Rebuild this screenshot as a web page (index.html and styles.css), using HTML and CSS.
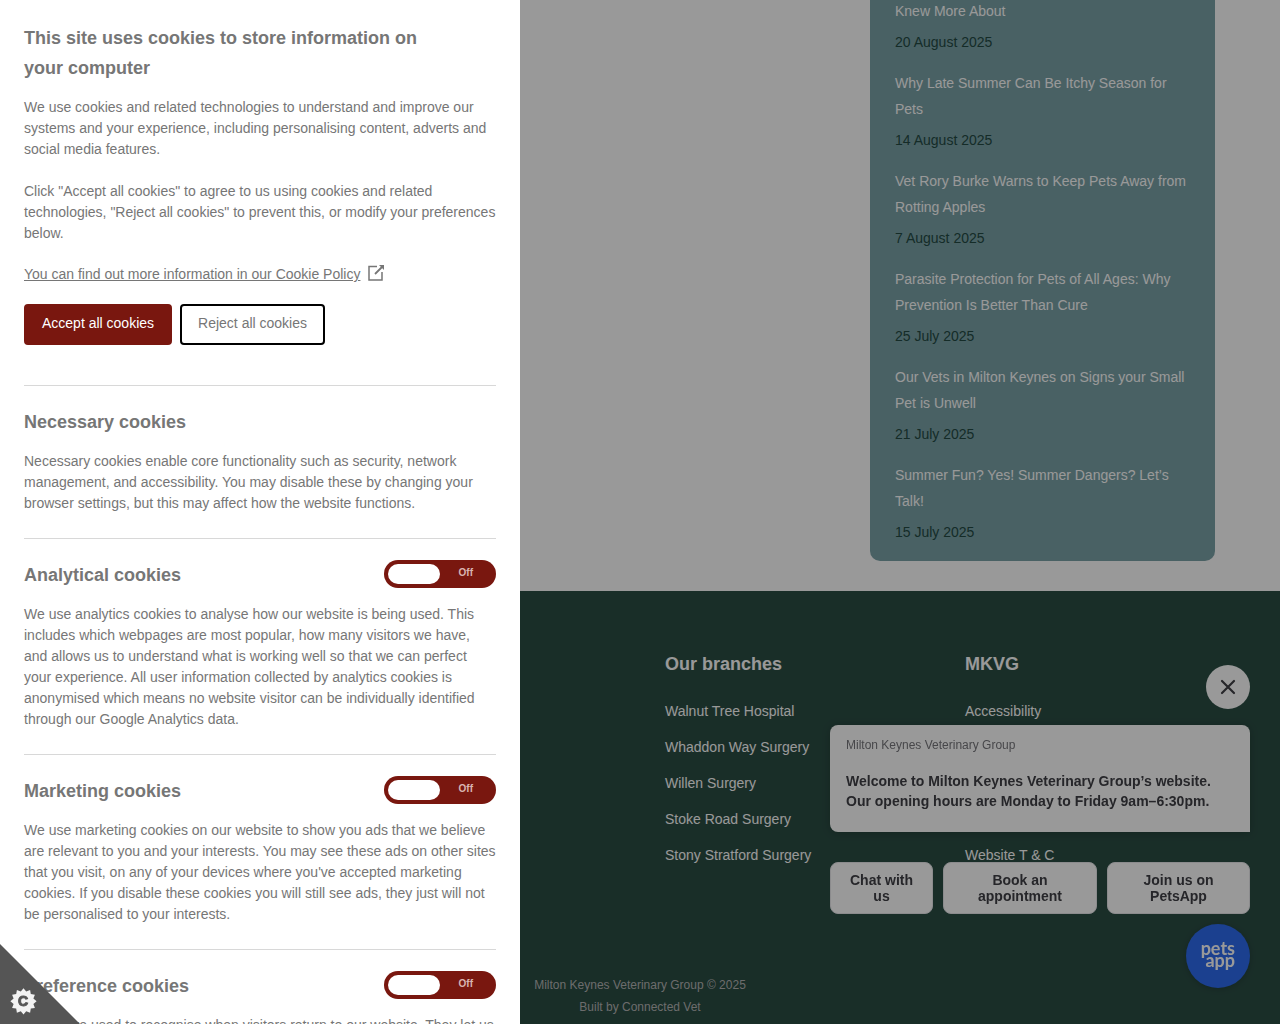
FILE: index.html
```html
<!DOCTYPE html>
<html lang="en">
<head>
<meta charset="utf-8">
<meta name="viewport" content="width=device-width, initial-scale=1">
<title>Milton Keynes Veterinary Group</title>
<link rel="stylesheet" href="styles.css">
</head>
<body>
<div class="site">
  <main class="main">
    <div class="container">
      <aside class="news">
        <ul class="news-list">
          <li><a href="#">Knew More About</a><time datetime="2025-08-20">20 August 2025</time></li>
          <li><a href="#">Why Late Summer Can Be Itchy Season for Pets</a><time datetime="2025-08-14">14 August 2025</time></li>
          <li><a href="#">Vet Rory Burke Warns to Keep Pets Away from Rotting Apples</a><time datetime="2025-08-07">7 August 2025</time></li>
          <li><a href="#">Parasite Protection for Pets of All Ages: Why Prevention Is Better Than Cure</a><time datetime="2025-07-25">25 July 2025</time></li>
          <li><a href="#">Our Vets in Milton Keynes on Signs your Small Pet is Unwell</a><time datetime="2025-07-21">21 July 2025</time></li>
          <li><a href="#">Summer Fun? Yes! Summer Dangers? Let’s Talk!</a><time datetime="2025-07-15">15 July 2025</time></li>
        </ul>
      </aside>
    </div>
  </main>
  <footer class="footer">
    <div class="container footer-grid">
      <section class="footer-col footer-branches">
        <h2>Our branches</h2>
        <ul>
          <li><a href="#">Walnut Tree Hospital</a></li>
          <li><a href="#">Whaddon Way Surgery</a></li>
          <li><a href="#">Willen Surgery</a></li>
          <li><a href="#">Stoke Road Surgery</a></li>
          <li><a href="#">Stony Stratford Surgery</a></li>
        </ul>
      </section>
      <section class="footer-col">
        <h2>MKVG</h2>
        <ul>
          <li><a href="#">Accessibility</a></li>
          <li><a href="#">Website T &amp; C</a></li>
        </ul>
      </section>
    </div>
    <div class="legal">
      <p>Milton Keynes Veterinary Group © 2025</p>
      <p>Built by <a href="#">Connected Vet</a></p>
    </div>
  </footer>
</div>

<div class="chat">
  <button class="chat-close" type="button" aria-label="Close">
    <svg width="16" height="16" viewBox="0 0 16 16" aria-hidden="true"><path d="M2 2l12 12M14 2L2 14" fill="none" stroke="#404046" stroke-width="2.2" stroke-linecap="round"/></svg>
  </button>
  <div class="chat-card">
    <p class="chat-from">Milton Keynes Veterinary Group</p>
    <p class="chat-message">Welcome to Milton Keynes Veterinary Group’s website. Our opening hours are Monday to Friday 9am–6:30pm.</p>
  </div>
  <div class="chat-actions">
    <button type="button">Chat with us</button>
    <button type="button">Book an appointment</button>
    <button type="button">Join us on PetsApp</button>
  </div>
  <button class="chat-launcher" type="button">pets<br>app</button>
</div>

<div class="overlay"></div>

<div class="cookies" role="dialog" aria-labelledby="cookies-title">
  <section class="cookies-intro">
    <h2 id="cookies-title">This site uses cookies to store information on your computer</h2>
    <p>We use cookies and related technologies to understand and improve our systems and your experience, including personalising content, adverts and social media features.</p>
    <p>Click "Accept all cookies" to agree to us using cookies and related technologies, "Reject all cookies" to prevent this, or modify your preferences below.</p>
    <a class="policy" href="#"><span>You can find out more information in our Cookie Policy</span>
      <svg width="16" height="16" viewBox="0 0 16 16" aria-hidden="true"><path d="M9 1.5H1v13.500h13V7" fill="none" stroke="#767676" stroke-width="1.5"/><path d="M7 9l7-7" fill="none" stroke="#767676" stroke-width="1.8"/><path d="M11 0h5v5z" fill="#767676"/></svg>
    </a>
    <div class="cookies-actions">
      <button class="accept" type="button">Accept all cookies</button>
      <button class="reject" type="button">Reject all cookies</button>
    </div>
  </section>
  <section class="category">
    <div class="category-head"><h3>Necessary cookies</h3></div>
    <p>Necessary cookies enable core functionality such as security, network management, and accessibility. You may disable these by changing your browser settings, but this may affect how the website functions.</p>
  </section>
  <section class="category">
    <div class="category-head"><h3>Analytical cookies</h3>
      <label class="toggle"><input type="checkbox" aria-label="Analytical cookies"><span>Off</span></label></div>
    <p>We use analytics cookies to analyse how our website is being used. This includes which webpages are most popular, how many visitors we have, and allows us to understand what is working well so that we can perfect your experience. All user information collected by analytics cookies is anonymised which means no website visitor can be individually identified through our Google Analytics data.</p>
  </section>
  <section class="category">
    <div class="category-head"><h3>Marketing cookies</h3>
      <label class="toggle"><input type="checkbox" aria-label="Marketing cookies"><span>Off</span></label></div>
    <p>We use marketing cookies on our website to show you ads that we believe are relevant to you and your interests. You may see these ads on other sites that you visit, on any of your devices where you've accepted marketing cookies. If you disable these cookies you will still see ads, they just will not be personalised to your interests.</p>
  </section>
  <section class="category">
    <div class="category-head"><h3>Preference cookies</h3>
      <label class="toggle"><input type="checkbox" aria-label="Preference cookies"><span>Off</span></label></div>
    <p>These are used to recognise when visitors return to our website. They let us</p>
  </section>
</div>

<button class="corner" type="button" aria-label="Cookie preferences">
  <svg width="80" height="80" viewBox="0 0 80 80" aria-hidden="true">
    <path d="M0 0l80 80H0z" fill="#555"/>
    <path d="M23.5 44.2l2.7 3.2 3.9-1.5.7 4.1 4.1.7-1.5 3.9 3.2 2.7-3.2 2.7 1.5 3.9-4.1.7-.7 4.1-3.9-1.5-2.7 3.2-2.7-3.2-3.9 1.5-.7-4.1-4.1-.7 1.5-3.9-3.2-2.7 3.2-2.7-1.5-3.9 4.1-.7.7-4.1 3.9 1.5z" fill="#f2f2f2"/>
    <text class="corner-letter" x="23" y="62" text-anchor="middle">C</text>
  </svg>
</button>
</body>
</html>
```
FILE: styles.css
```css
* { box-sizing: border-box; }

body {
  margin: 0;
  height: 100vh;
  overflow: hidden;
  background: #fff;
  font: 14px/26px "Liberation Sans", Arial, sans-serif;
}

h2, h3, p, ul { margin: 0; padding: 0; }
ul { list-style: none; }
a { color: inherit; text-decoration: none; }
button { font-family: inherit; cursor: pointer; }

.site {
  min-height: 100vh;
  display: flex;
  flex-direction: column;
}

.container {
  width: 100%;
  max-width: 1180px;
  margin: 0 auto;
  padding: 0 15px;
}

.main { overflow: hidden; padding-bottom: 30px; }

.news {
  width: 30%;
  min-width: 320px;
  margin: -2px 0 0 auto;
  padding: 0 25px;
  border-radius: 0 0 10px 10px;
  background: #7ba2a7;
  color: #fff;
}

.news-list { padding-bottom: 16px; display: grid; gap: 15px; }
.news-list li { display: grid; gap: 5px; }
.news-list time { color: #234a44; }

.footer {
  flex: 1;
  background: #2b4d44;
  color: #fff;
  padding-top: 58px;
}

.footer-grid {
  display: grid;
  grid-template-columns: repeat(4, 1fr);
  gap: 50px;
}

.footer-col { display: flex; flex-direction: column; gap: 19px; }
.footer-branches { grid-column-start: 3; }
.footer-col h2 { font-size: 18px; line-height: 30px; }

.footer-col ul {
  flex: 1;
  display: flex;
  flex-direction: column;
  justify-content: space-between;
  gap: 10px;
}

.legal {
  padding-top: 106px;
  text-align: center;
  font-size: 12px;
  line-height: 22px;
  color: #b5b5b5;
}

.chat {
  position: fixed;
  right: 30px;
  bottom: 36px;
  width: 420px;
  display: flex;
  flex-direction: column;
  align-items: flex-end;
  color: #404046;
}

.chat-close {
  width: 44px;
  height: 44px;
  border: 0;
  border-radius: 50%;
  background: #fff;
  display: grid;
  place-items: center;
}

.chat-card {
  width: 100%;
  margin: 16px 0 30px;
  padding: 10px 16px 21px;
  border-radius: 8px 8px 0 8px;
  background: #fff;
  box-shadow: 0 1px 8px rgba(0, 0, 0, .2);
}

.chat-from { font-size: 12px; line-height: 20px; color: #77777c; }
.chat-message { margin-top: 16px; font-weight: 700; line-height: 20px; }

.chat-actions {
  width: 100%;
  display: grid;
  grid-template-columns: 103fr 154fr 143fr;
  gap: 10px;
}

.chat-actions button {
  padding: 9px 16px;
  border: 1px solid #e8e8ec;
  border-radius: 8px;
  background: #fff;
  color: inherit;
  font-size: 14px;
  font-weight: 700;
  line-height: 16px;
}

.chat-launcher {
  width: 64px;
  height: 64px;
  margin-top: 10px;
  padding: 0 15px 4px 0;
  border: 0;
  border-radius: 50%;
  background: #2d6bee;
  box-shadow: 0 1px 6px rgba(0, 0, 0, .2);
  color: #fff;
  font: 700 18px/12px Lato, sans-serif;
  text-align: right;
}

.overlay {
  position: fixed;
  inset: 0;
  background: rgba(0, 0, 0, .4);
}

.cookies {
  position: fixed;
  inset: 0 auto 0 0;
  width: 520px;
  max-width: 100%;
  overflow: hidden;
  padding: 23px 24px 0;
  background: #fff;
  color: #767676;
  line-height: 21px;
}

.cookies h2, .cookies h3 { font-size: 18px; line-height: 30px; }
.cookies h2 { padding-right: 48px; margin-bottom: 14px; }
.cookies-intro { padding-bottom: 40px; }
.cookies-intro p { margin-bottom: 21px; }
.cookies-intro p + p { margin-bottom: 20px; }
.policy { display: flex; gap: 8px; }
.policy svg { margin-top: 1px; }
.policy span { text-decoration: underline; }
.cookies-actions { display: flex; gap: 8px; margin-top: 19px; }

.cookies-actions button {
  padding: 7px 16px 9px;
  border: 2px solid #79170f;
  border-radius: 4px;
  font-size: 14px;
  line-height: 21px;
}

.cookies-actions .accept { background: #79170f; color: #fff; }
.cookies-actions .reject { background: #fff; border-color: #000; color: #767676; }

.category { border-top: 1px solid #d8d8d8; padding: 21px 0 24px; }
.category-head {
  display: flex;
  justify-content: space-between;
  align-items: flex-start;
  margin-bottom: 14px;
}

.toggle { display: grid; cursor: pointer; }
.toggle input, .toggle span { grid-area: 1 / 1; }

.toggle input {
  appearance: none;
  width: 112px;
  height: 28px;
  margin: 0;
  padding: 4px;
  border-radius: 14px;
  background: #79170f;
}

.toggle input::before {
  content: "";
  display: block;
  width: 52px;
  height: 20px;
  border-radius: 10px;
  background: #fff;
}

.toggle span {
  justify-self: end;
  padding-right: 23px;
  font-size: 10px;
  font-weight: 700;
  line-height: 26px;
  color: #d9b5b2;
}

.corner {
  position: fixed;
  left: 0;
  bottom: 0;
  padding: 0;
  border: 0;
  background: none;
}

.corner svg { display: block; }
.corner-letter { font: 700 14px "Liberation Sans", Arial, sans-serif; fill: #555; stroke: #555; }
```
